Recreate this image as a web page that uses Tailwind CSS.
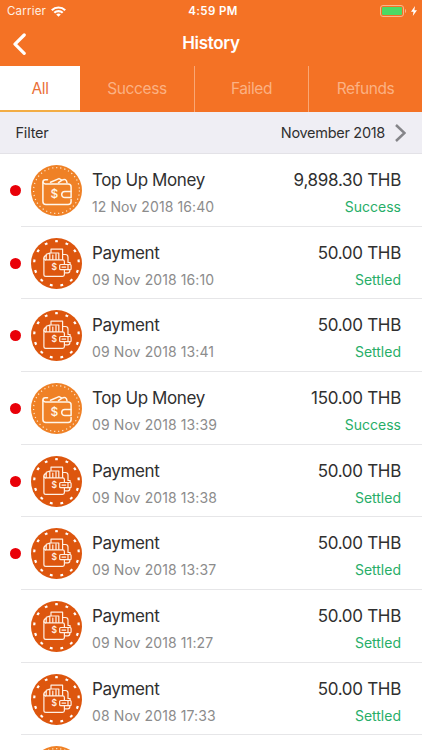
<!DOCTYPE html>
<html lang="en">
<head>
  <meta charset="UTF-8" />
  <meta name="viewport" content="width=device-width, initial-scale=1" />
  <title>History</title>
  <script src="https://cdn.jsdelivr.net/npm/@tailwindcss/browser@4"></script>
</head>
<body class="flex h-screen flex-col overflow-hidden bg-white text-[#303030] font-['Inter',sans-serif]">

  <!-- shared icons -->
  <svg class="hidden">
    <symbol id="icon-topup" viewBox="0 0 51 51">
      <circle cx="25.5" cy="25.5" r="25.5" fill="#ef8126" />
      <circle cx="25.5" cy="25.5" r="22.9" fill="none" stroke="#ffe9d0" stroke-width="1.2" stroke-dasharray="1.2 2.91" />
      <g fill="none" stroke="#fff6ea" stroke-width="1.5" stroke-linecap="round" stroke-linejoin="round">
        <path d="M16.5 14.8h-2.2a2.4 2.4 0 0 0-2.4 2.4v19.2a3 3 0 0 0 3 3h22.2a3 3 0 0 0 3-3v-2" />
        <path d="M12 17.2c.2 1.2 1 1.7 2.4 1.7h22.7a3 3 0 0 1 3 3v4.3" />
        <path d="M40.1 26.4h-6.3a3.1 3.1 0 0 0 0 6.2h6.3z" />
        <path d="M19.500 17.200l8.500-3.600 3 1.500M27.500 17.600l3.500-2.500c2.500-1.400 4.800-.6 5 2.700" />
      </g>
      <text x="23.5" y="33.4" text-anchor="middle" font-size="12" font-weight="500" fill="#fff6ea">$</text>
    </symbol>
    <symbol id="icon-payment" viewBox="0 0 51 51">
      <circle cx="25.5" cy="25.5" r="25.5" fill="#dd560e" />
      <circle cx="25.5" cy="25.5" r="22.3" fill="none" stroke="#fff" stroke-width="2.2" pathLength="130" stroke-dasharray="2.6 7.4" stroke-dashoffset="1.3" transform="rotate(-90 25.5 25.5)" />
      <g fill="none" stroke="#fff0e4" stroke-width="1.2" stroke-linecap="round" stroke-linejoin="round">
        <path d="M14.5 21.9h17.2a1.7 1.7 0 0 1 1.7 1.7v2.7M33.4 31.9v4.6a1.8 1.8 0 0 1-1.8 1.8H14.8a1.9 1.9 0 0 1-1.9-1.9V20.2c0-1.7 1-2.4 2.3-2.6" />
        <path d="M12.9 20.2c0 1.2.6 1.7 1.6 1.7" />
        <path d="M15.2 21.5v-5.2l3.6-1.2v6.4M18.8 15h9v6.5M21.8 17v4.5M25 16v5.5" />
        <path d="M20 14.500v-3.300h11.600v10.300M31.600 16.500h2.800a2.600 2.600 0 0 1 2.600 2.600v5.400h2.100v2M33.600 34.800h3.200a2 2 0 0 0 2-2v-1" />
        <rect x="28.7" y="26.5" width="11.4" height="5.2" rx="1" />
        <path d="M37 26.500v5.200M31 29.100h3.600" />
      </g>
      <text x="23.3" y="31.8" text-anchor="middle" font-size="8.5" font-weight="600" fill="#fff0e4">$</text>
    </symbol>
  </svg>

  <header class="shrink-0 bg-[#f47225] text-white">
    <div class="grid h-[22px] grid-cols-3 items-center pl-[7px] pr-[5px] pt-[1px] text-[11.5px]">
      <div class="flex items-center gap-[5px] text-[#fff0e4]">
        <span class="tracking-[0.2px]">Carrier</span>
        <svg class="h-[11px] w-[15px]" viewBox="0 0 15 11" fill="none" stroke="#fff" stroke-width="2.2">
          <path d="M.8 4.200a9.600 9.600 0 0 1 13.400 0M3.300 6.800a6 6 0 0 1 8.400 0" />
          <path d="M7.500 10.800L5.200 8.500a3.300 3.300 0 0 1 4.600 0z" fill="#fff" stroke="none" />
        </svg>
      </div>
      <span class="pl-[2px] text-center font-semibold tracking-[0.4px]">4:59 PM</span>
      <div class="flex items-center justify-end gap-[4px]">
        <svg class="-mt-[1px] h-[12px] w-[27px]" viewBox="0 0 27 12">
          <rect x=".5" y=".5" width="23" height="11" rx="2.5" fill="none" stroke="#fbb68b" />
          <rect x="2" y="2" width="20" height="8" rx="1" fill="#4cd964" />
          <path d="M25 4v4c1.500-.6 1.500-3.400 0-4z" fill="#fbb68b" />
        </svg>
        <svg class="-mt-[1px] h-[10px] w-[6px]" viewBox="0 0 6 10" fill="#fff"><path d="M4 0L0 5.700h2.500L1.800 10 6 4.200H3.400z" /></svg>
      </div>
    </div>

    <div class="grid h-[44px] grid-cols-3 items-center px-[13px]">
      <svg class="-mt-[1px] h-[22px] w-[13px]" viewBox="0 0 13 22" fill="none" stroke="#fff" stroke-width="3.2" stroke-linecap="round" stroke-linejoin="round"><path d="M11.200 2L2 11.200l9.200 9.200" /></svg>
      <h1 class="text-center text-[17px] font-semibold tracking-[-0.3px]">History</h1>
    </div>

    <nav class="grid h-[46px] grid-cols-[80px_115px_114px_113px] text-[15.5px] tracking-[-0.4px] text-[#fbb183]">
      <a class="flex items-center justify-center border-b-2 border-[#f3ad45] bg-white pt-[1px] text-[#ea7037]">All</a>
      <a class="flex items-center justify-center border-r border-[#f9a774]">Success</a>
      <a class="flex items-center justify-center border-r border-[#f9a774]">Failed</a>
      <a class="flex items-center justify-center">Refunds</a>
    </nav>
  </header>

  <div class="flex h-[42px] shrink-0 items-center border-b border-[#e3e2e7] bg-[#efeef4] pl-[15.5px] pr-[16px] text-[14.5px]">
    <span class="tracking-[-0.2px]">Filter</span>
    <span class="ml-auto tracking-[-0.3px]">November 2018</span>
    <svg class="ml-[10px] h-[18px] w-[11px]" viewBox="0 0 11 18" fill="none" stroke="#858589" stroke-width="2.5"><path d="M1 1l8.500 8L1 17" /></svg>
  </div>

  <ul id="history" class="shrink-0"></ul>

  <!-- next entry, still loading below the fold -->
  <div class="min-h-0 flex-1 overflow-hidden pl-[31px] pt-[11px]">
    <svg class="size-[51px]"><use href="#icon-topup" /></svg>
  </div>

  <script>
    const items = [
      { type: "topup", date: "12 Nov 2018 16:40", amount: "9,898.30", unread: true },
      { type: "payment", date: "09 Nov 2018 16:10", amount: "50.00", unread: true },
      { type: "payment", date: "09 Nov 2018 13:41", amount: "50.00", unread: true },
      { type: "topup", date: "09 Nov 2018 13:39", amount: "150.00", unread: true },
      { type: "payment", date: "09 Nov 2018 13:38", amount: "50.00", unread: true },
      { type: "payment", date: "09 Nov 2018 13:37", amount: "50.00", unread: true },
      { type: "payment", date: "09 Nov 2018 11:27", amount: "50.00", unread: false },
      { type: "payment", date: "08 Nov 2018 17:33", amount: "50.00", unread: false },
    ];

    const history = document.getElementById("history");

    items.forEach(item => {
      const topup = item.type === "topup";
      const row = document.createElement("li");
      row.className = "flex h-[72.66px] pl-[10px]";
      row.innerHTML = `
        <span class="mt-[31px] size-[11px] shrink-0 rounded-full ${item.unread ? "bg-[#e90008]" : ""}"></span>
        <div class="flex flex-1 border-b border-[#e6e6e8] pl-[10px] pr-[21px]">
          <svg class="mt-[11px] size-[51px] shrink-0"><use href="#icon-${item.type}" /></svg>
          <div class="ml-[10px] flex-1 pt-[14px]">
            <p class="text-[17px] leading-[24px] tracking-[-0.4px]">${topup ? "Top Up Money" : "Payment"}</p>
            <p class="mt-[4px] text-[14px] leading-[22px] tracking-[0.1px] text-[#8c8c8c]">${item.date}</p>
          </div>
          <div class="pt-[14px] text-right">
            <p class="text-[17px] leading-[24px] tracking-[-0.3px]">${item.amount} THB</p>
            <p class="mt-[4px] text-[14px] leading-[22px] text-[#27ae68]">${topup ? "Success" : "Settled"}</p>
          </div>
        </div>`;
      history.append(row);
    });
  </script>

</body>
</html>
